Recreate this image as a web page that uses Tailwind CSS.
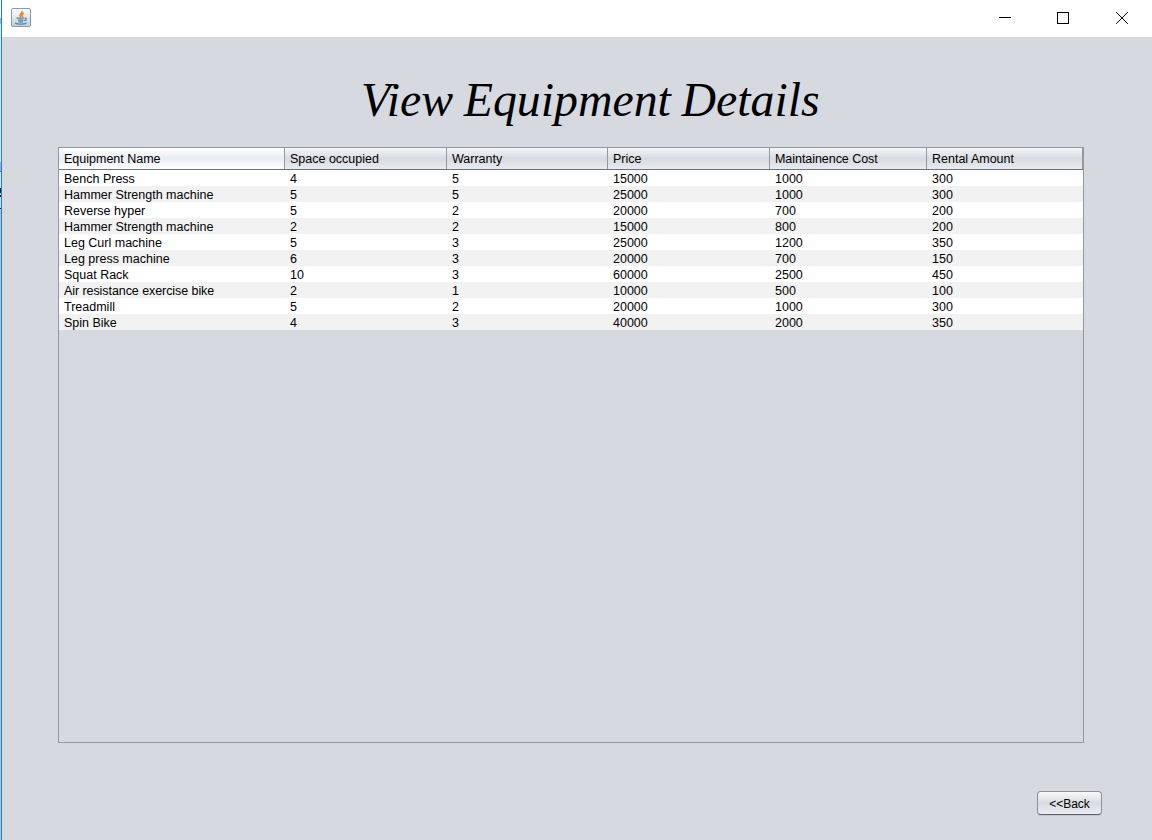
<!DOCTYPE html>
<html lang="en">
<head>
<meta charset="utf-8">
<title>View Equipment Details</title>
<script src="https://cdn.jsdelivr.net/npm/@tailwindcss/browser@4"></script>
</head>
<body class="flex h-[840px] w-[1152px] overflow-hidden bg-[#d6d9e0] text-[12.5px] leading-4 text-black [font-family:'Liberation_Sans',Arial,sans-serif]">
<div class="flex w-px shrink-0 flex-col bg-[#bfc1c5]">
  <div class="h-[18px] bg-white"></div><div class="h-[6px] bg-[#b0b4ba]"></div><div class="h-[138px] bg-[#e3e5e9]"></div><div class="h-[9px] bg-[#aaaeb5]"></div><div class="h-px bg-[#666]"></div><div class="h-[16px] bg-[#dfe1e6]"></div><div class="h-[5px] bg-[#101830]"></div><div class="h-[2px] bg-[#c6c9cf]"></div><div class="h-[2px] bg-black"></div><div class="h-[11px] bg-[#d6d9df]"></div><div class="h-px bg-black"></div>
</div>
<main class="flex h-full flex-1 flex-col border-l border-[#1883d7]">
  <header class="flex h-[37px] items-start justify-between bg-white">
    <svg class="mt-[7px] ml-[8px]" width="22" height="22" viewBox="0 0 22 22" fill="none">
      <defs><linearGradient id="g" x1="0" y1="0" x2="0" y2="1"><stop stop-color="#fff"/><stop offset="1" stop-color="#b9cfdd"/></linearGradient></defs>
      <rect x="1.5" y="1.5" width="19" height="18" rx="1.500" fill="url(#g)" stroke="#8a9ba8"/>
      <path d="M11.800 4c1.500 2.300-3.800 3-1 6.200M13.800 6c-2.500 1.200-2.500 2.200-1 4" stroke="#ee7d28" stroke-width="1.500"/>
      <path d="M6.500 11.200h7.500M8 13.200h5.500M8.500 14.900h4.500M14.500 11.200c2.500-.5 2.300 2-.3 2.500M5 16c2 1.600 9.500 1.600 11.500 0" stroke="#5b83a0" stroke-width="1.200"/>
    </svg>
    <svg class="mr-[22px]" width="132" height="37" viewBox="0 0 132 37" fill="none" stroke="#000" shape-rendering="crispEdges">
      <path d="M1 17.500h12"/><rect x="59.500" y="12.500" width="11" height="11"/>
      <path d="M118.200 12.200l11.600 11.600M129.800 12.200l-11.600 11.600" shape-rendering="auto"/>
    </svg>
  </header>
  <h1 class="mt-[34px] ml-[359px] h-[57px] text-[47.8px] leading-[58px] [word-spacing:-1.2px] whitespace-nowrap italic [font-family:'Liberation_Serif',serif]">View Equipment Details</h1>
  <section class="mt-[19px] ml-[56px] h-[596px] w-[1026px] border border-[#9297a1]">
    <div class="grid h-[22px] grid-cols-[226px_162px_161px_162px_157px_156px] border-b border-[#6e7279] bg-linear-to-b from-[#f6f7f9] via-[#d7dae0] to-[#e8ebf2] *:h-[21px] *:border-r *:border-[#9297a1] *:pt-px *:pl-[5px] *:leading-[21px]">
      <div class="bg-linear-to-b from-white via-[#e9ecf2] to-white">Equipment Name</div><div>Space occupied</div><div>Warranty</div><div>Price</div><div class="tracking-[-0.05px]">Maintainence Cost</div><div>Rental Amount</div>
    </div>
    <div id="rows"></div>
  </section>
  <button class="mt-[48px] ml-[1035px] h-[24px] w-[65px] rounded-[4px] border border-[#8d9197] border-b-[#5f6368] bg-linear-to-b from-[#f8f9fa] via-[#d8dbe1] to-[#eaedf4] pt-px text-[12px] leading-[22px] shadow-[0_1px_0_#c3c6cc]">&lt;&lt;Back</button>
</main>
<script>
const data = [
 ['Bench Press',4,5,15000,1000,300],['Hammer Strength machine',5,5,25000,1000,300],
 ['Reverse hyper',5,2,20000,700,200],['Hammer Strength machine',2,2,15000,800,200],
 ['Leg Curl machine',5,3,25000,1200,350],['Leg press machine',6,3,20000,700,150],
 ['Squat Rack',10,3,60000,2500,450],['Air resistance exercise bike',2,1,10000,500,100],
 ['Treadmill',5,2,20000,1000,300],['Spin Bike',4,3,40000,2000,350]];
document.getElementById('rows').innerHTML = data.map(r =>
 '<div class="grid h-4 grid-cols-[226px_162px_161px_162px_157px_156px] bg-white pl-[5px] leading-[18px] even:bg-[#f2f2f2]">' +
 r.map(c => '<div class="whitespace-nowrap' + (String(c).length > 25 ? ' tracking-[-0.07px]' : '') + '">' + c + '</div>').join('') + '</div>').join('');
</script>
</body>
</html>
